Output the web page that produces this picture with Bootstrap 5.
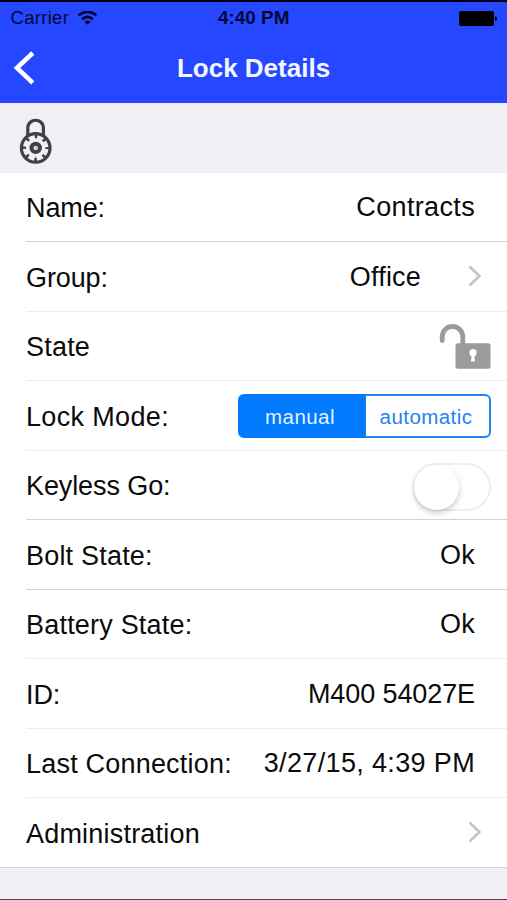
<!DOCTYPE html>
<html lang="en">
<head>
<meta charset="utf-8">
<meta name="viewport" content="width=device-width, initial-scale=1">
<title>Lock Details</title>
<link href="https://cdn.jsdelivr.net/npm/bootstrap@5.3.0/dist/css/bootstrap.min.css" rel="stylesheet">
<style>
body{font-family:"Liberation Sans",Arial,sans-serif;background:#efeff4;color:#0b0b0b;height:900px;overflow:hidden;line-height:1}
.app-top{background:#2547ff;border-top:2px solid #000018;height:102.5px}
.status-line{height:33px;color:#030836;font-size:18.5px;padding:0 10px 0 10.5px}
.status-line .carrier{letter-spacing:.3px}
.status-line .clock{font-size:18.9px;font-weight:700}
.title-line{height:66px;padding:0 14px}
.title-line h1{font-size:26px;font-weight:700;line-height:1;color:#f4f6ff;letter-spacing:0}
.side{flex:1 1 0}
.lock-strip{height:70px;padding:15px 0 0 19px}
.rows{background:#fff;border-bottom:1px solid #d3d3d6}
.setting{height:69.5px;margin-left:26px;border-bottom:1px solid #ececed;font-size:27px;letter-spacing:.2px;padding-right:32px}
.setting.strong-line{border-bottom-color:#d2d2d4}
.setting:last-child{border-bottom:0;height:68.5px}
.setting .lbl{padding-top:4px}
.setting .val{padding-top:2px}
.to-edge{padding-right:16px}
.with-arrow{padding-right:25px}
.office{margin-right:47px}
.tight{letter-spacing:-.1px}
.wide{letter-spacing:.35px}
.modes{width:253px;height:44.5px;margin-top:1px}
.modes .btn{--bs-btn-color:#1d82f5;--bs-btn-border-color:#2383f4;--bs-btn-border-width:2px;--bs-btn-border-radius:6px;--bs-btn-active-bg:#007aff;--bs-btn-active-border-color:#007aff;--bs-btn-active-color:#e4f2ff;font-size:20.5px;letter-spacing:.45px;line-height:1;width:50%}
.modes .btn span{display:block;padding:2px 3px 0 0}
.switch-track{width:79px;height:48px;border:2px solid #efefef;border-radius:24px;margin-top:5px}
.switch-knob{width:45px;height:45px;background:#fff;border-radius:50%;box-shadow:0 4px 5px rgba(0,0,0,.14),2px 1px 9px rgba(0,0,0,.05)}
.bottom-edge{height:1.5px;background:#454548}
</style>
</head>
<body class="d-flex flex-column">
<header class="app-top flex-shrink-0">
  <div class="status-line d-flex align-items-center">
    <div class="side d-flex align-items-center"><span class="carrier">Carrier</span>
      <svg class="ms-2" width="21" height="16" viewBox="0 0 21 16" fill="none" stroke="#030836" stroke-width="2.6"><path d="M1.5 4.2Q10.5-2.6 19.5 4.2M5 8.2Q10.5 3.6 16 8.2"/><path d="M7.4 10.7Q10.5 8.2 13.6 10.7L10.5 13.8Z" fill="#030836" stroke="none"/></svg>
    </div>
    <span class="clock">4:40 PM</span>
    <div class="side d-flex justify-content-end"><svg width="38" height="16" viewBox="0 0 38 16"><rect width="35" height="15" rx="2" fill="#000"/><path d="M36 5Q38 5.5 38 7.5T36 10Z" fill="#000"/></svg></div>
  </div>
  <div class="title-line d-flex align-items-center">
    <div class="side"><svg width="21" height="34" viewBox="0 0 21 34" fill="none" stroke="#fff" stroke-width="4.6"><path d="M18.8 2L3 16.9L18.8 31.8"/></svg></div>
    <h1 class="m-0">Lock Details</h1>
    <div class="side"></div>
  </div>
</header>
<div class="lock-strip flex-shrink-0">
  <svg width="34" height="47" viewBox="0 0 34 47" fill="none" stroke="#404145">
    <path d="M8.8 17V10.2C8.8-.4 24.4-.4 24.4 10.2V17" stroke-width="3.2"/>
    <circle cx="16.7" cy="29.9" r="14.3" stroke-width="3.2"/>
    <circle cx="16.7" cy="29.9" r="11.5" stroke-width="3.8" stroke-dasharray="2.6 6.432" stroke-dashoffset="1.3"/>
    <circle cx="16.7" cy="29.9" r="4.2" stroke-width="4"/>
    <circle cx="16.7" cy="29.9" r="1.6" fill="#c4c4c8" stroke="none"/>
  </svg>
</div>
<main class="rows flex-shrink-0">
  <div class="setting strong-line d-flex align-items-center justify-content-between"><span class="lbl tight">Name:</span><span class="val wide">Contracts</span></div>
  <div class="setting with-arrow d-flex align-items-center"><span class="lbl tight me-auto">Group:</span><span class="val office">Office</span>
    <svg width="14" height="22" viewBox="0 0 14 22" fill="none" stroke="#c4c4c8" stroke-width="2.5"><path d="M1.5 1.5L11.5 11L1.5 20.5"/></svg></div>
  <div class="setting to-edge d-flex align-items-center justify-content-between"><span class="lbl">State</span>
    <svg width="52" height="46" viewBox="0 0 52 46"><path d="M3.2 17.5V14.5C3.2-.2 23.8-.2 23.8 14.5V22" fill="none" stroke="#9b9b9b" stroke-width="4.8" stroke-linecap="round"/><rect x="16.5" y="20.2" width="35" height="25.5" rx="2.5" fill="#9b9b9b"/><circle cx="34" cy="29.7" r="3.6" fill="#fff"/><path d="M32.8 30H35.2L36 38.5H32Z" fill="#fff"/></svg></div>
  <div class="setting to-edge d-flex align-items-center justify-content-between"><span class="lbl wide">Lock Mode:</span>
    <div class="btn-group modes" role="group"><button type="button" class="btn active p-0"><span>manual</span></button><button type="button" class="btn p-0"><span>automatic</span></button></div></div>
  <div class="setting strong-line to-edge d-flex align-items-center justify-content-between"><span class="lbl tight">Keyless Go:</span><div class="switch-track"><div class="switch-knob"></div></div></div>
  <div class="setting strong-line d-flex align-items-center justify-content-between"><span class="lbl">Bolt State:</span><span class="val">Ok</span></div>
  <div class="setting d-flex align-items-center justify-content-between"><span class="lbl">Battery State:</span><span class="val">Ok</span></div>
  <div class="setting d-flex align-items-center justify-content-between"><span class="lbl tight">ID:</span><span class="val tight">M400 54027E</span></div>
  <div class="setting d-flex align-items-center justify-content-between"><span class="lbl">Last Connection:</span><span class="val wide">3/27/15, 4:39 PM</span></div>
  <div class="setting with-arrow d-flex align-items-center justify-content-between"><span class="lbl">Administration</span>
    <svg width="14" height="22" viewBox="0 0 14 22" fill="none" stroke="#c4c4c8" stroke-width="2.5"><path d="M1.5 1.5L11.5 11L1.5 20.5"/></svg></div>
</main>
<div class="bottom-edge mt-auto flex-shrink-0"></div>
<script src="https://cdn.jsdelivr.net/npm/bootstrap@5.3.0/dist/js/bootstrap.bundle.min.js"></script>
</body>
</html>
